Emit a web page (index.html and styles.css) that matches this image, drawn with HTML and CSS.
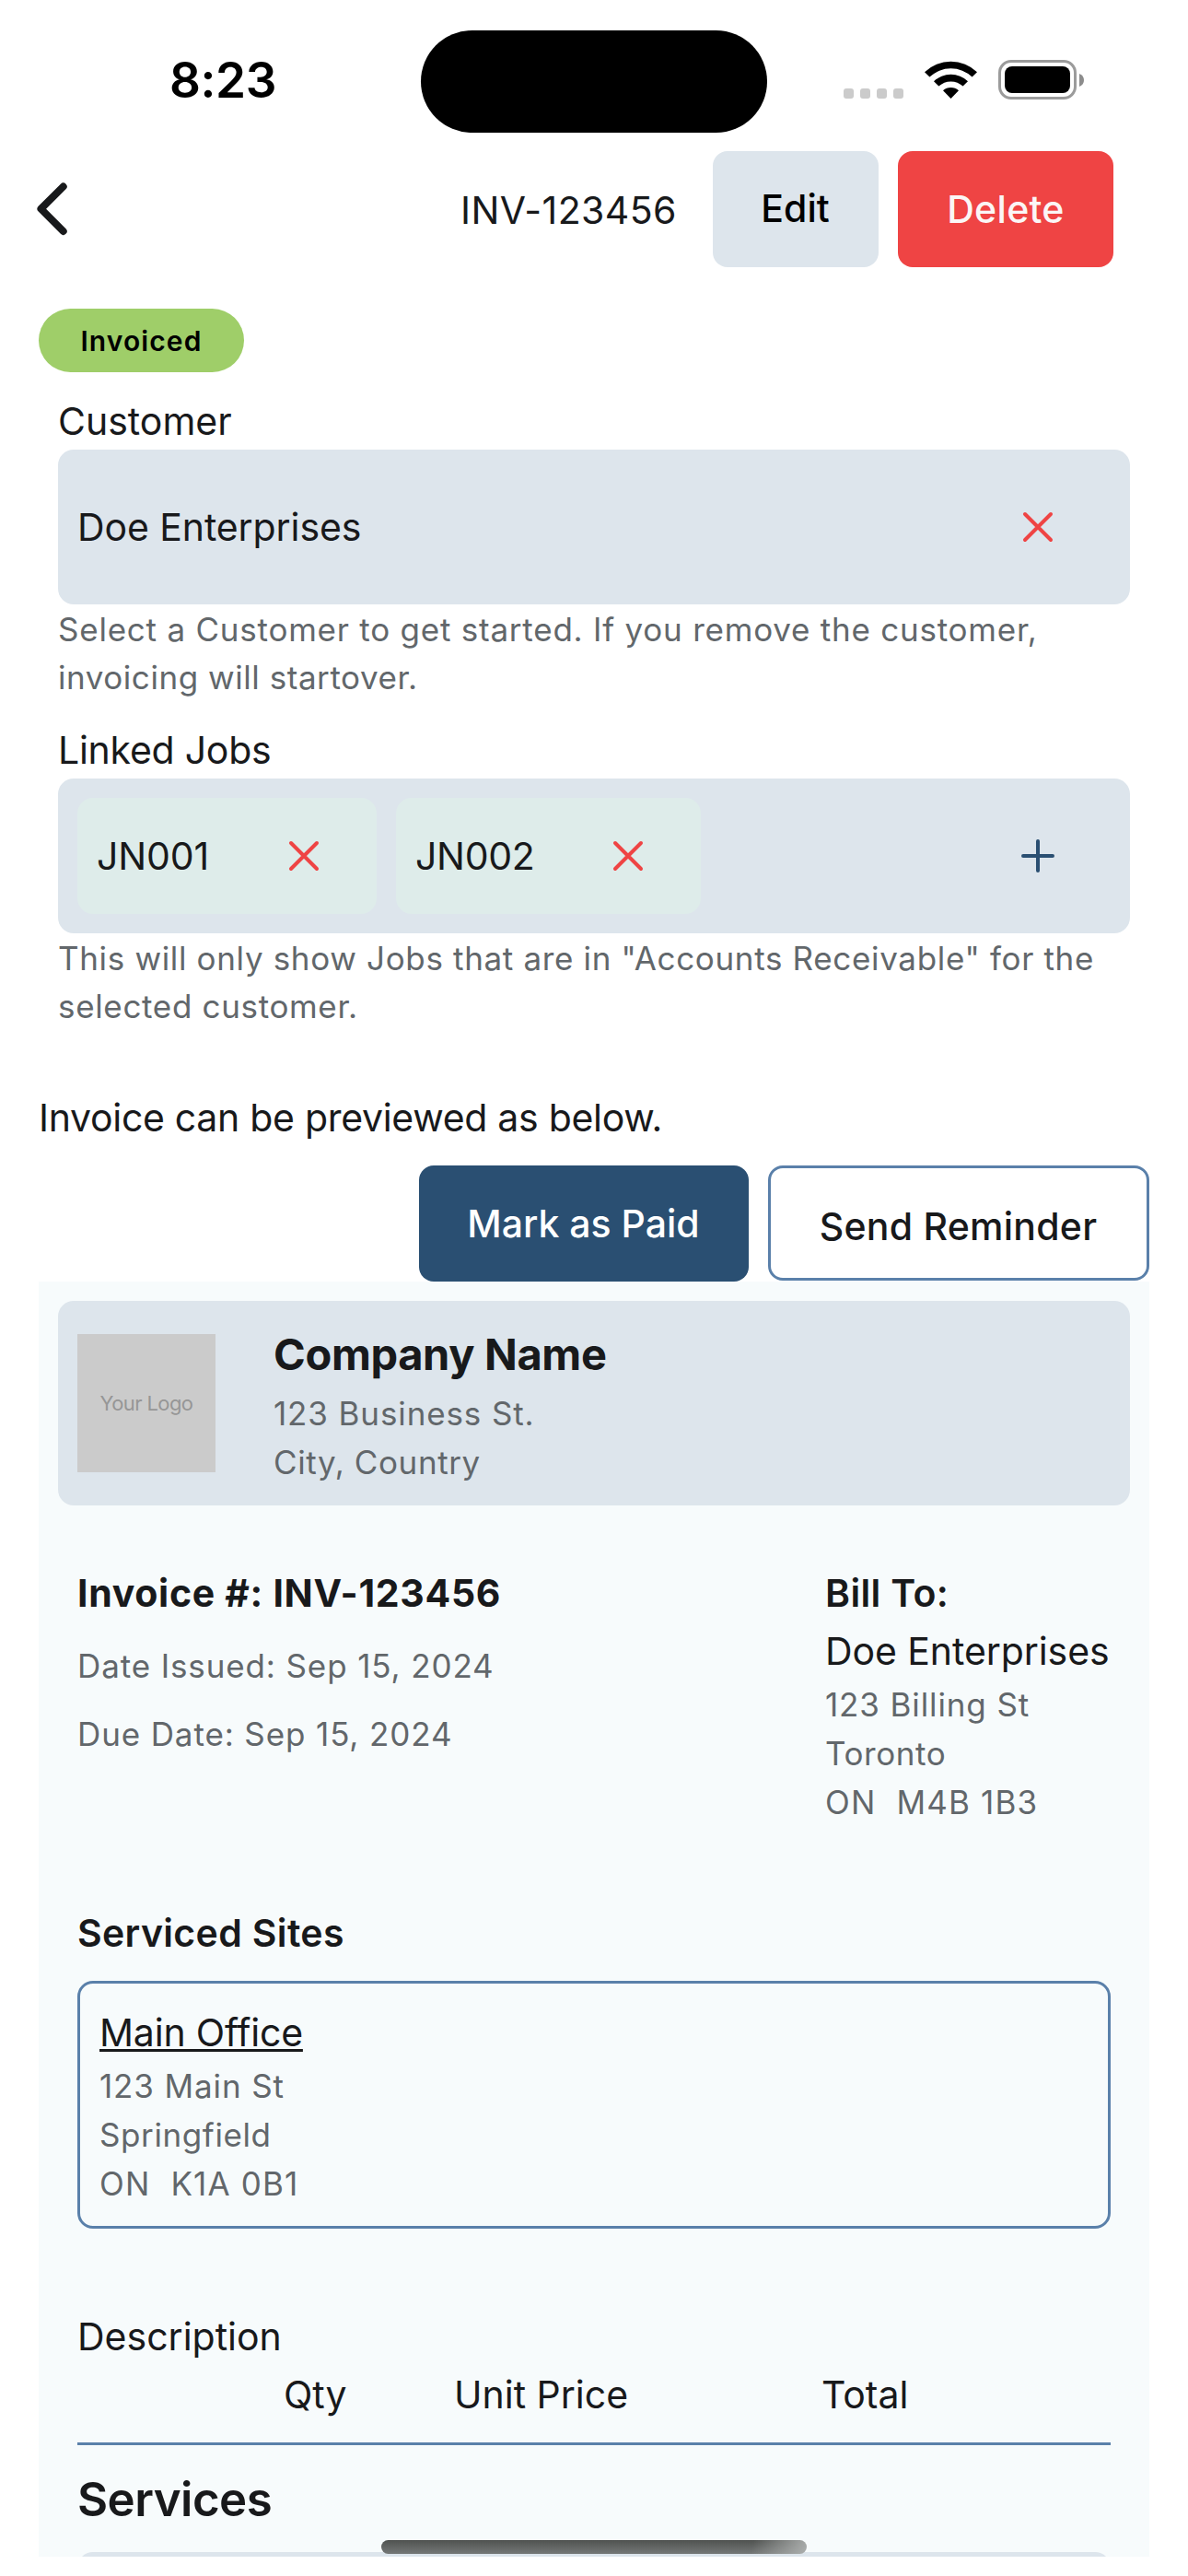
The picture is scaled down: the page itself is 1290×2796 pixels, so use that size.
FILE: index.html
```html
<!DOCTYPE html>
<html lang="en">
<head>
<meta charset="utf-8">
<title>INV-123456</title>
<link rel="stylesheet" href="styles.css">
</head>
<body>
<div class="status-bar">
  <div class="clock">8:23</div>
  <div class="island"></div>
  <div class="signal"><i></i><i></i><i></i><i></i></div>
  <svg class="wifi" width="57" height="42" viewBox="0 0 57 42">
    <path d="M0 13.2A41 41 0 0 1 57 13.2L51.6 18.6A33.5 33.5 0 0 0 5.4 18.6Z"/>
    <path d="M10 23.2A27 27 0 0 1 47 23.2L41.6 28.6A19.3 19.3 0 0 0 15.4 28.6Z"/>
    <path d="M20 33.2A13 13 0 0 1 37 33.2L28.5 42Z"/>
  </svg>
  <svg class="battery" width="94" height="43" viewBox="0 0 94 43">
    <rect x="1.5" y="1.5" width="82" height="40" rx="12.5" fill="none" stroke="#9b9b9b" stroke-width="3"/>
    <rect x="7" y="7" width="71" height="29" rx="8"/>
    <path d="M88 15Q93 17 93 22Q93 27 88 29Z" fill="#8c8c8c"/>
  </svg>
</div>

<header class="nav">
  <svg class="back" width="34" height="58" viewBox="0 0 34 58"><path d="M28.7 4.5L4.5 28.7L28.7 53" fill="none" stroke="#18191b" stroke-width="8" stroke-linecap="round" stroke-linejoin="round"/></svg>
  <h1 class="nav-title">INV-123456</h1>
  <button class="btn btn-edit">Edit</button>
  <button class="btn btn-delete">Delete</button>
</header>

<main class="page">
  <span class="badge">Invoiced</span>

  <section class="field">
    <h2 class="label">Customer</h2>
    <div class="input-box">
      <span class="customer">Doe Enterprises</span>
      <svg class="icon push" viewBox="0 0 32 32"><path class="cross" d="M2 2L30 30M30 2L2 30"/></svg>
    </div>
    <p class="help">Select a Customer to get started. If you remove the customer,<br><span class="help-end">invoicing will startover.</span></p>
  </section>

  <section class="field">
    <h2 class="label label-jobs">Linked Jobs</h2>
    <div class="input-box">
      <div class="chip chip-first"><span>JN001</span><svg class="icon push" viewBox="0 0 32 32"><path class="cross" d="M2 2L30 30M30 2L2 30"/></svg></div>
      <div class="chip"><span>JN002</span><svg class="icon push" viewBox="0 0 32 32"><path class="cross" d="M2 2L30 30M30 2L2 30"/></svg></div>
      <svg class="icon push" viewBox="0 0 32 32"><path class="plus" d="M16 0V32M0 16H32"/></svg>
    </div>
    <p class="help help-jobs">This will only show Jobs that are in "Accounts Receivable" for the<br>selected customer.</p>
  </section>

  <p class="preview-note">Invoice can be previewed as below.</p>
  <div class="actions">
    <button class="btn btn-paid">Mark as Paid</button>
    <button class="btn btn-reminder">Send Reminder</button>
  </div>

  <article class="invoice">
    <div class="company">
      <div class="logo">Your Logo</div>
      <div class="company-info">
        <h2 class="company-name">Company Name</h2>
        <p class="muted">123 Business St.</p>
        <p class="muted tight">City, Country</p>
      </div>
    </div>

    <div class="sheet">
      <div class="meta">
        <div class="meta-left">
          <h3 class="invoice-no">Invoice #: INV-123456</h3>
          <p class="muted date">Date Issued: Sep 15, 2024</p>
          <p class="muted date">Due Date: Sep 15, 2024</p>
        </div>
        <div class="bill-to">
          <h3 class="strong bill-label">Bill To:</h3>
          <p class="name">Doe Enterprises</p>
          <p class="muted">123 Billing St</p>
          <p class="muted tight">Toronto</p>
          <p class="muted postal">ON&nbsp; M4B 1B3</p>
        </div>
      </div>

      <h3 class="strong sites-title">Serviced Sites</h3>
      <div class="site">
        <p class="name site-name"><u>Main Office</u></p>
        <p class="muted">123 Main St</p>
        <p class="muted tight">Springfield</p>
        <p class="muted postal">ON&nbsp; K1A 0B1</p>
      </div>

      <div class="table-head">
        <div class="row">Description</div>
        <div class="row cols"><span>Qty</span><span>Unit Price</span><span>Total</span></div>
      </div>
      <h2 class="services">Services</h2>
      <div class="service-card"></div>
    </div>
  </article>
</main>
<div class="home-indicator"></div>
</body>
</html>
```
FILE: styles.css
```css
* { box-sizing: border-box; }

body {
  position: relative;
  width: 1290px;
  height: 2796px;
  margin: 0;
  overflow: hidden;
  background: #fff;
  color: #18191b;
  font: 400 41px/60px Inter, "Liberation Sans", sans-serif;
}

h1, h2, h3, p { margin: 0; font: inherit; }

/* Status bar */
.status-bar { display: flex; align-items: flex-start; height: 164px; }
.clock {
  width: 273px;
  margin: 57px 0 0 184px;
  color: #000;
  font-size: 53px;
  font-weight: 600;
  letter-spacing: -0.4px;
}
.island { width: 376px; height: 111px; margin-top: 33px; border-radius: 56px; background: #000; }
.signal { display: flex; gap: 7px; margin: 96px 0 0 83px; }
.signal i { width: 11px; height: 11px; border-radius: 3px; background: #cbcbcb; }
.wifi { margin: 65px 0 0 23px; }
.battery { margin: 65px 0 0 23px; }

/* Navigation */
.nav { display: flex; align-items: center; height: 126px; padding: 0 81px 0 40px; }
.nav-title { width: 274px; margin-left: auto; padding-top: 2px; letter-spacing: 0.4px; }
.btn {
  height: 126px;
  padding: 0;
  border: 0;
  border-radius: 16px;
  background: #fff;
  color: inherit;
  font: inherit;
  font-weight: 500;
}
.btn-edit { width: 180px; padding: 0 1px 2px 0; background: #dde5ec; color: #000; }
.btn-delete { width: 234px; margin-left: 21px; background: #ef4444; color: #fbf6f6; letter-spacing: 0.3px; }

.page { padding: 45px 42px 0; }
.badge {
  display: block;
  width: 223px;
  height: 69px;
  border-radius: 35px;
  background: #9fce69;
  color: #000;
  font-size: 30px;
  font-weight: 600;
  line-height: 70px;
  letter-spacing: 1.1px;
  text-align: center;
}

/* Fields */
.field { padding: 23px 21px 0; }
.label { line-height: 61px; }
.label-jobs { letter-spacing: -0.25px; }
.input-box {
  display: flex;
  align-items: center;
  gap: 21px;
  height: 168px;
  padding: 0 21px;
  border-radius: 17px;
  background: #dde5ec;
}
.customer { letter-spacing: -0.1px; }
.chip {
  display: flex;
  align-items: center;
  width: 331px;
  height: 126px;
  padding-left: 21px;
  border-radius: 17px;
  background: #deecea;
  letter-spacing: -0.3px;
}
.chip-first { width: 325px; letter-spacing: -0.1px; }
.icon { width: 32px; height: 32px; overflow: visible; fill: none; stroke-width: 4; stroke-linecap: round; }
.push { margin: 0 63px 0 auto; }
.cross { stroke: #ef4444; }
.plus { stroke: #2a4f72; }
.help {
  margin-top: 1px;
  color: #62676b;
  font-size: 35px;
  line-height: 52px;
  letter-spacing: 0.77px;
  white-space: nowrap;
}
.help-end { letter-spacing: 0.55px; }
.help-jobs { letter-spacing: 0.66px; }

.preview-note { margin-top: 65px; line-height: 61px; letter-spacing: -0.3px; }
.actions { display: flex; justify-content: flex-end; gap: 21px; margin-top: 21px; }
.btn-paid { width: 358px; padding-right: 1px; background: #2a4f72; color: #fff; }
.btn-reminder {
  width: 414px;
  height: 125px;
  padding: 7px 1px 0 0;
  border: 3px solid #5a80aa;
  letter-spacing: 0.25px;
}

/* Invoice preview */
.invoice { height: 1384px; padding: 21px; overflow: hidden; background: #f7fbfc; }
.company { display: flex; height: 222px; padding-left: 21px; border-radius: 17px; background: #dde5ec; }
.logo {
  width: 150px;
  height: 150px;
  margin: 36px 63px 0 0;
  background: #cbcbcb;
  color: #969696;
  font-size: 22px;
  line-height: 151px;
  letter-spacing: -0.6px;
  text-align: center;
}
.company-info { padding-top: 29px; }
.company-name { margin-bottom: 9px; font-size: 47px; font-weight: 700; line-height: 58px; letter-spacing: -0.35px; }
.muted { color: #62676b; font-size: 35px; line-height: 53px; letter-spacing: 0.88px; }
.tight { letter-spacing: 0.6px; }
.postal { letter-spacing: 1.15px; }
.strong { font-weight: 600; letter-spacing: 0.35px; }

.sheet { padding: 65px 21px 0; }
.meta { display: flex; justify-content: space-between; }
.invoice-no { margin-bottom: 23px; font-weight: 700; letter-spacing: 0.7px; }
.date { margin-bottom: 21px; letter-spacing: 0.88px; }
.bill-to { width: 310px; }
.bill-label { margin-bottom: 3px; }
.name { margin-bottom: 2px; letter-spacing: -0.08px; white-space: nowrap; }
.sites-title { margin-top: 85px; }
.site { height: 269px; margin-top: 22px; padding: 23px 21px 0; border: 3px solid #5a80aa; border-radius: 17px; }
.site-name { letter-spacing: -0.2px; }
.site-name u { text-decoration-thickness: 3px; text-underline-offset: 3px; text-decoration-skip-ink: none; }

.table-head { margin-top: 87px; padding-bottom: 22px; border-bottom: 3px solid #5a80aa; }
.cols { display: grid; grid-template-columns: 185px 399px 1fr; margin-top: 3px; padding-left: 224px; }
.services { margin-top: 22px; font-size: 51px; font-weight: 600; line-height: 73px; letter-spacing: -0.55px; }
.service-card { height: 126px; margin-top: 21px; border-radius: 17px; background: #dde5ec; }

.home-indicator {
  position: absolute;
  left: 414px;
  top: 2757px;
  width: 462px;
  height: 15px;
  border-radius: 8px;
  background:
    linear-gradient(100deg, rgba(178, 181, 180, 0) 87%, rgba(178, 181, 180, 0.9) 100%),
    linear-gradient(#4f5250, #757877);
}
```
